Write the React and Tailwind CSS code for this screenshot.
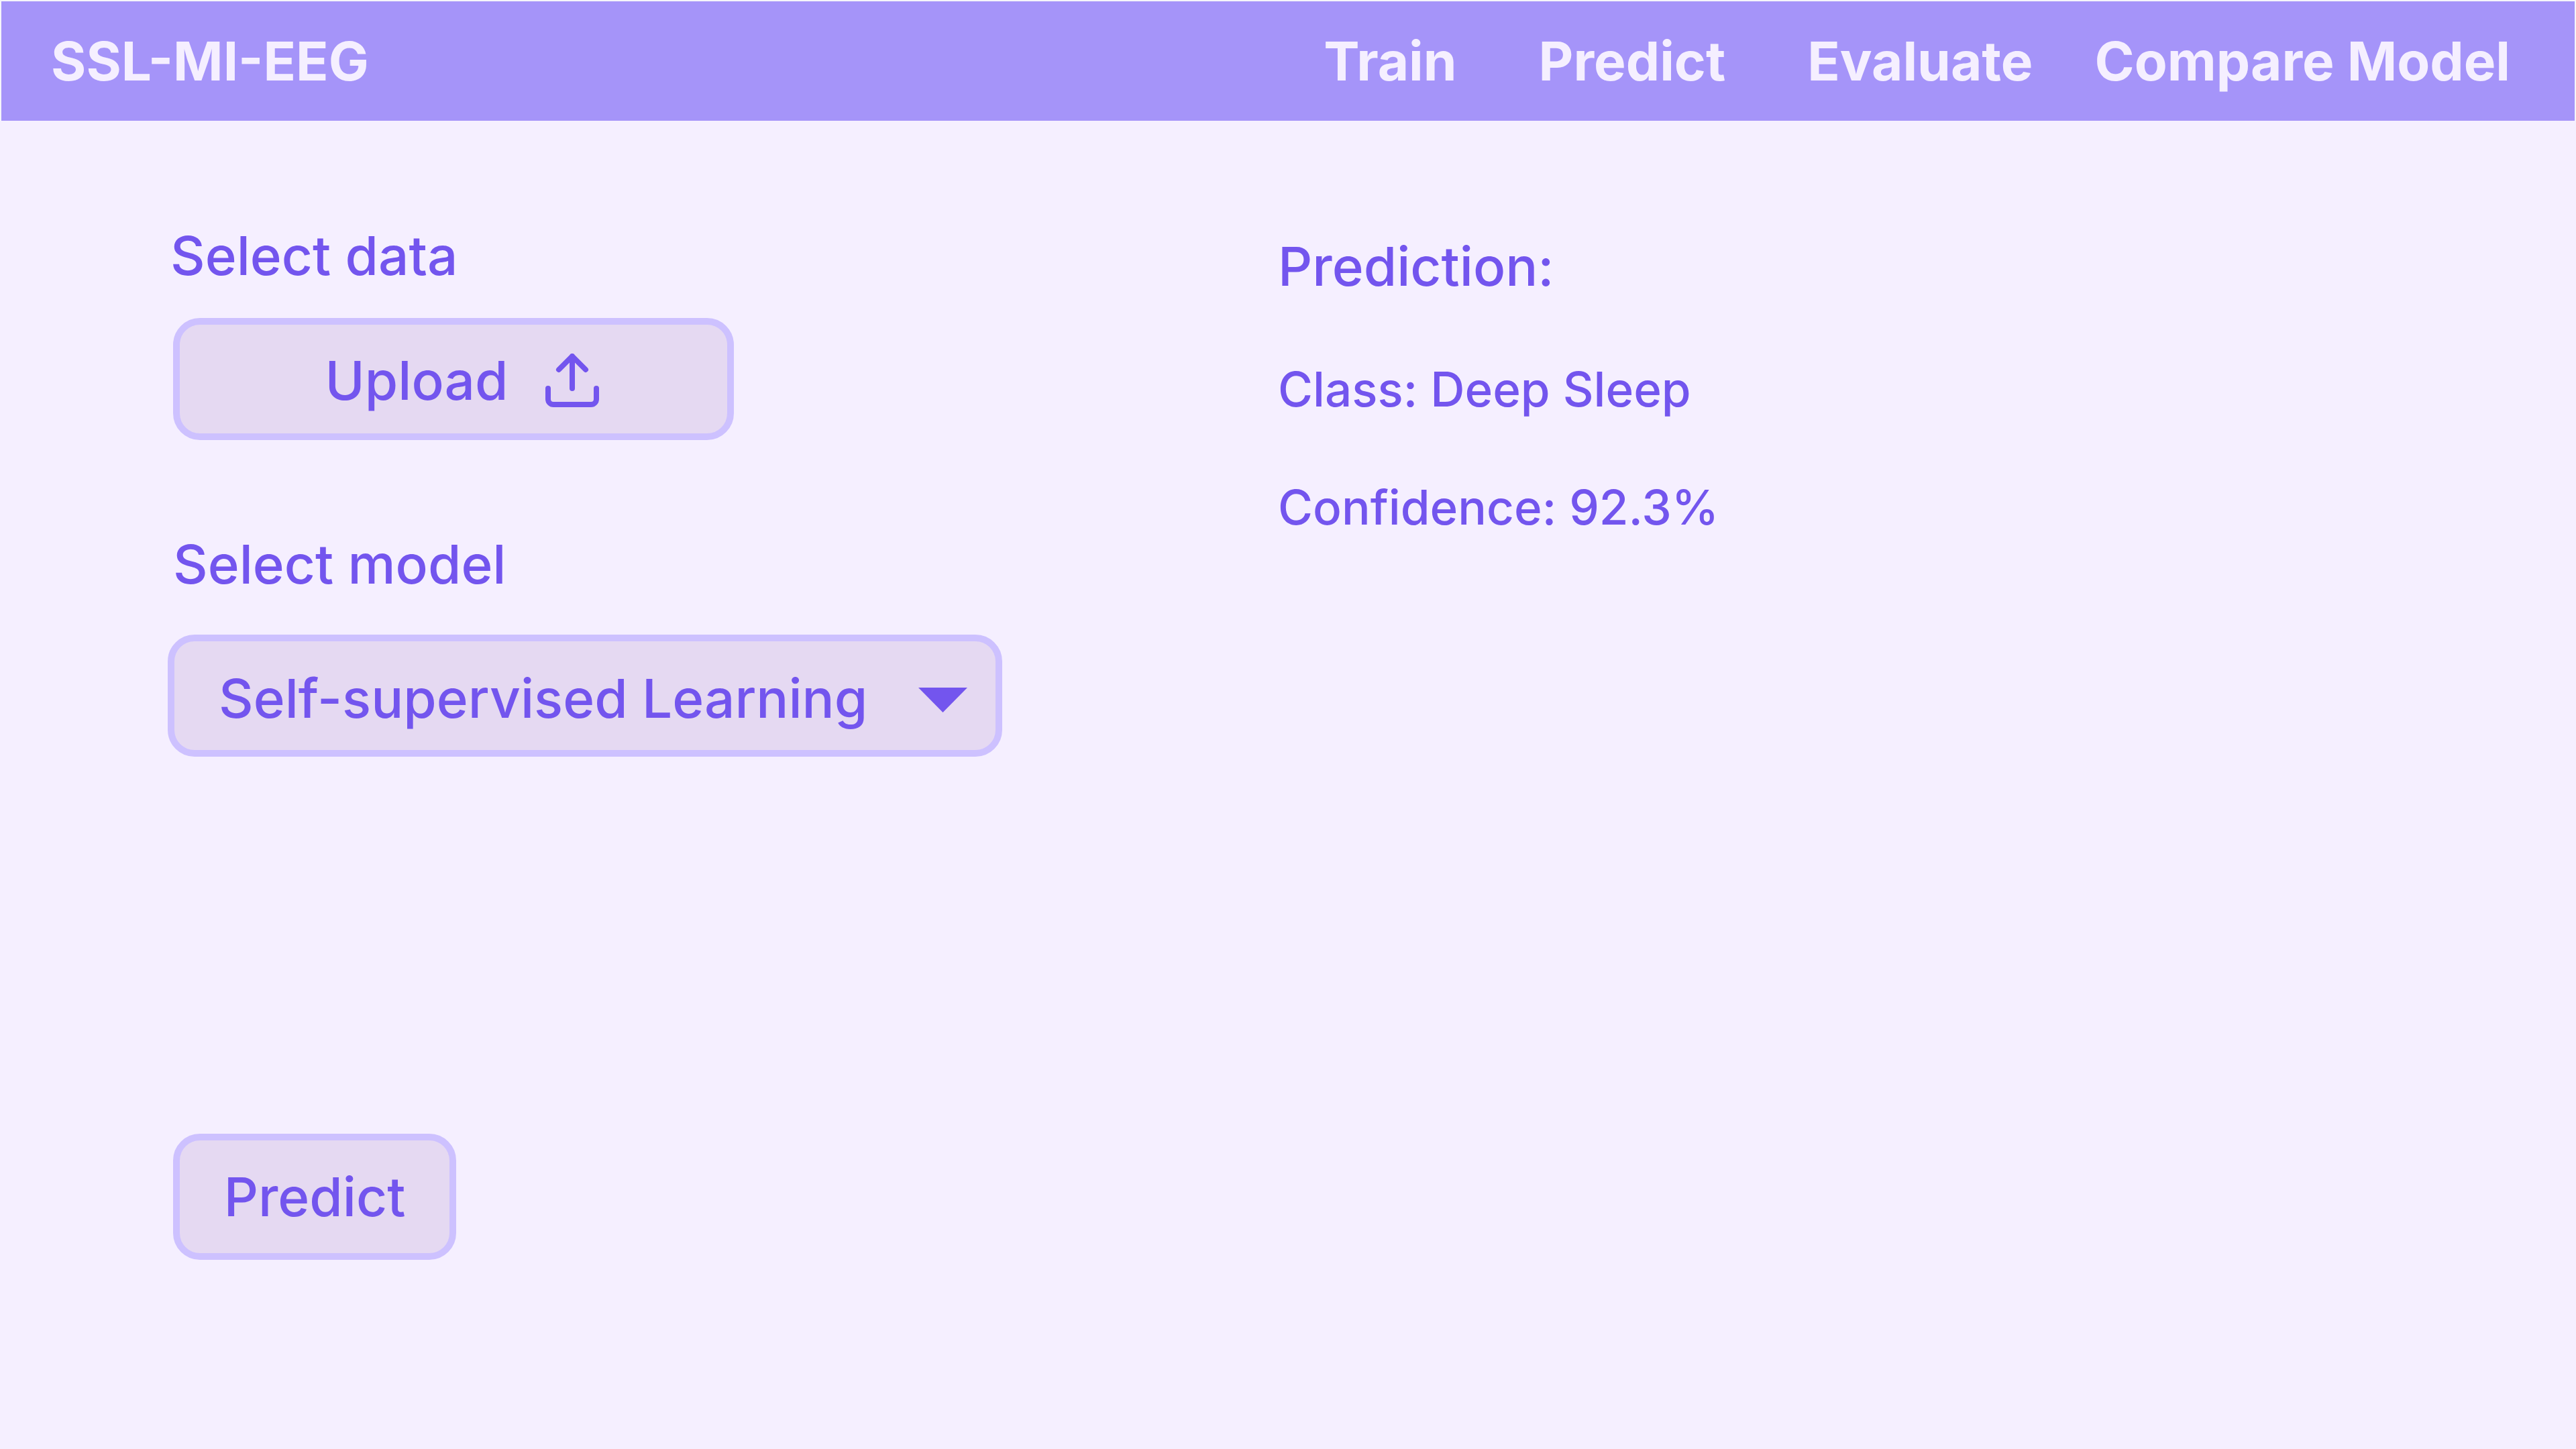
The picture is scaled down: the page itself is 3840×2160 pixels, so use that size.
import React from "react";

const control = "rounded-[40px] border-[10px] border-[#cdc1ff] bg-[#e5d9f2]";

function UploadIcon() {
  return (
    <svg
      className="size-20"
      viewBox="0 0 80 80"
      fill="none"
      stroke="currentColor"
      strokeWidth="8"
      strokeLinecap="round"
      strokeLinejoin="round"
      aria-hidden="true"
    >
      <path d="M4 52v16a8 8 0 0 0 8 8h56a8 8 0 0 0 8-8V52" />
      <path d="M40 52V4M20 24L40 4l20 20" />
    </svg>
  );
}

export default function App() {
  return (
    <div className="min-h-screen bg-[#f5efff] font-['Inter',sans-serif] text-[80px] leading-[96px] font-medium text-[#7355ee]">
      <header className="flex h-[180px] items-center justify-between border-x-2 border-t-2 border-[#f5f5fa] bg-[#a594f9] pr-[96px] pl-[74px] font-bold text-[#f5efff]">
        <div>SSL-MI-EEG</div>
        <nav className="flex">
          <a href="#train" className="mr-[122px]">Train</a>
          <a href="#predict" className="mr-[122px]">Predict</a>
          <a href="#evaluate" className="mr-[92px]">Evaluate</a>
          <a href="#compare">Compare Model</a>
        </nav>
      </header>
      <main className="grid grid-cols-[127fr_129fr]">
        <section className="flex flex-col items-start pt-[153px] pl-[250px]">
          <h2 className="ml-1">Select data</h2>
          <button
            type="button"
            className={control + " mt-[45px] ml-2 flex h-[182px] w-[836px] items-center justify-center gap-14 pt-1 pl-[26px]"}
          >
            Upload
            <UploadIcon />
          </button>
          <label htmlFor="model" className="mt-[137px] ml-2">Select model</label>
          <div className="relative mt-[57px]">
            <select id="model" className={control + " block h-[182px] w-[1244px] appearance-none px-[66px] pt-2"}>
              <option>Self-supervised Learning</option>
            </select>
            <svg
              className="pointer-events-none absolute top-[79px] right-[52px] h-[37px] w-[73px]"
              viewBox="0 0 73 37"
              fill="currentColor"
              aria-hidden="true"
            >
              <path d="M0 0h73L36.5 37z" />
            </svg>
          </div>
          <button type="button" className={control + " mt-[562px] ml-2 h-[188px] w-[422px]"}>
            Predict
          </button>
        </section>
        <section className="pt-[169px]">
          <h2>Prediction:</h2>
          <p className="mt-[87px] text-[71px]">Class: Deep Sleep</p>
          <p className="mt-20 text-[71px]">Confidence: 92.3%</p>
        </section>
      </main>
    </div>
  );
}
